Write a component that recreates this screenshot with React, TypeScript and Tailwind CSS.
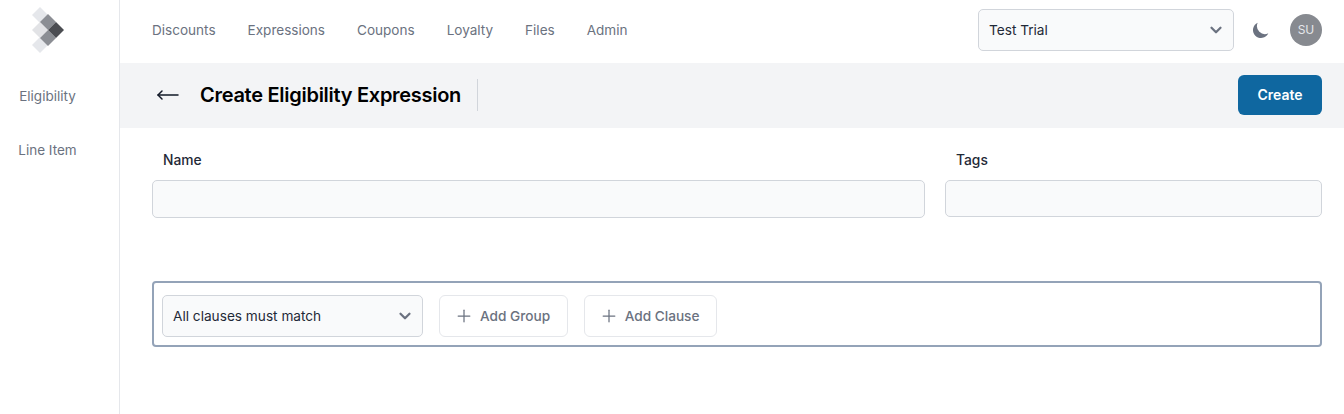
import React from 'react'
import { ChevronDown, MoveLeft, Plus } from 'lucide-react'

const font = { fontFamily: 'Inter, "Liberation Sans", sans-serif' }

function Logo() {
  return (
    <svg width="36" height="46" viewBox="0 0 36 46" className="block">
      <polygon points="10,0 18,8 10,16 2,8" fill="#e5e7eb" />
      <polygon points="10,15 18,23 10,31 2,23" fill="#e2e3e6" />
      <polygon points="10,30 18,38 10,46 2,38" fill="#e5e7eb" />
      <polygon points="18,7 26,15 18,23 10,15" fill="#8b8e94" />
      <polygon points="18,23 26,31 18,39 10,31" fill="#8b8e94" />
      <polygon points="26,15 34,23 26,31 18,23" fill="#4b4d52" />
    </svg>
  )
}

function Moon() {
  return (
    <svg width="20" height="20" viewBox="0 0 20 20" fill="#6b7280">
      <path d="M17.293 13.293A8 8 0 0 1 6.707 2.707a8.001 8.001 0 1 0 10.586 10.586z" />
    </svg>
  )
}

function Select({ label, className }: { label: string; className: string }) {
  return (
    <div className={`flex items-center justify-between rounded-[5px] border border-[#d1d5db] bg-[#f9fafb] pl-[10px] pr-[8px] text-[13.65px] text-[#1f2937] ${className}`}>
      <span>{label}</span>
      <ChevronDown size={18} strokeWidth={3} className="text-[#6b7280]" />
    </div>
  )
}

function AddButton({ label }: { label: string }) {
  return (
    <button className="flex h-[42px] items-center gap-[6px] rounded-md border border-[#e5e7eb] bg-white pl-[14px] pr-[16.5px] text-[13.65px] font-medium text-[#6b7280]">
      <Plus size={20} strokeWidth={1.5} />
      {label}
    </button>
  )
}

export default function App() {
  const nav = ['Discounts', 'Expressions', 'Coupons', 'Loyalty', 'Files', 'Admin']

  return (
    <div className="flex h-[414px] w-[1344px] overflow-hidden bg-white" style={font}>
      {/* sidebar */}
      <aside className="flex w-[120px] shrink-0 flex-col items-center border-r border-[#e5e7eb] pr-[24px]">
        <div className="mt-[7px] h-[46px]">
          <Logo />
        </div>
        <div className="mt-[33px] text-[13.5px] leading-5 text-[#6b7280]">Eligibility</div>
        <div className="mt-[34px] text-[13.5px] leading-5 text-[#6b7280]">Line Item</div>
      </aside>

      <main className="flex min-w-0 flex-1 flex-col">
        {/* top nav */}
        <header className="flex h-[63px] items-center pb-[3px] pl-[32px] pr-[22px]">
          <nav className="flex flex-1 gap-8 text-[13.55px] text-[#6b7280]">
            {nav.map((item) => (
              <span key={item}>{item}</span>
            ))}
          </nav>
          <Select label="Test Trial" className="h-[42px] w-[256px]" />
          <div className="ml-[17px] mr-[19px]">
            <Moon />
          </div>
          <div className="flex h-8 w-8 items-center justify-center rounded-full bg-[#878a90] text-xs text-[#e5e7eb]">SU</div>
        </header>

        {/* title bar */}
        <div className="flex h-[65px] items-center bg-[#f3f4f6] pb-[2px] pl-[36px] pr-[22px]">
          <MoveLeft size={24} strokeWidth={1.5} className="text-[#111827]" />
          <h1 className="ml-[20px] text-xl leading-7 font-semibold tracking-[-0.28px] text-black">Create Eligibility Expression</h1>
          <div className="ml-[16px] h-[32px] w-px bg-[#d1d5db]" />
          <button className="ml-auto h-10 w-[84px] rounded-md bg-[#0f67a0] text-sm font-semibold text-white">Create</button>
        </div>

        {/* form */}
        <div className="flex gap-5 pt-[22px] pl-[32px] pr-[22px]">
          <div className="flex-1">
            <label className="block pl-[11px] text-[13.8px] leading-5 font-medium text-[#1f2937]">Name</label>
            <div className="mt-[10px] h-[38px] rounded-[5px] border border-[#d1d5db] bg-[#f9fafb]" />
          </div>
          <div className="w-[377px]">
            <label className="block pl-[11px] text-[13.8px] leading-5 font-medium text-[#1f2937]">Tags</label>
            <div className="mt-[10px] h-[37px] rounded-[5px] border border-[#d1d5db] bg-[#f9fafb]" />
          </div>
        </div>

        {/* expression builder */}
        <div className="mt-[63px] ml-[32px] mr-[22px] flex h-[66px] items-start gap-4 rounded-sm border-2 border-[#94a3b8] pt-3 pl-2">
          <Select label="All clauses must match" className="h-[42px] w-[261px]" />
          <AddButton label="Add Group" />
          <AddButton label="Add Clause" />
        </div>
      </main>
    </div>
  )
}
